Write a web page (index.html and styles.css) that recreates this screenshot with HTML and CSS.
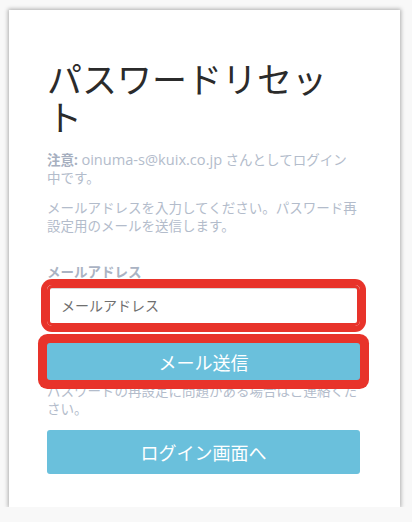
FILE: index.html
```html
<!DOCTYPE html>
<html lang="ja">
<head>
  <meta charset="UTF-8">
  <meta name="viewport" content="width=device-width, initial-scale=1.0">
  <title>パスワードリセット</title>
  <link rel="stylesheet" href="styles.css">
</head>
<body>
  <div class="reset-card">
    <h1>パスワードリセット</h1>
    <p class="note"><strong>注意:</strong> <span class="mail">oinuma-s@kuix.co.jp</span> さんとしてログイン中です。</p>
    <p class="note">メールアドレスを入力してください。パスワード再設定用のメールを送信します。</p>

    <form class="reset-form" onsubmit="return false">
      <label for="email">メールアドレス</label>
      <input type="email" id="email" class="marked" placeholder="メールアドレス">
      <button type="submit" class="btn marked">メール送信</button>
    </form>

    <p class="note help">パスワードの再設定に問題がある場合はご連絡ください。</p>
    <button class="btn" onclick="location.href='#login'">ログイン画面へ</button>
  </div>
</body>
</html>
```

FILE: styles.css
```css
body {
  font-family: "Open Sans", "Noto Sans CJK JP", sans-serif;
  background: #f8f8f8;
  color: #333;
  margin: 0;
  padding: 10px 0 0 9px;
}
.reset-card {
  width: 391px;
  box-sizing: border-box;
  background: #fff;
  padding: 49px 40px 33px 38px;
  box-shadow: 0 0 4px 1px rgba(0,0,0,0.3);
}
h1 {
  font-family: "Noto Sans CJK JP", sans-serif;
  font-size: 35px;
  font-weight: 400;
  line-height: 38px;
  margin: 0 0 15px;
  color: #2b2b2b;
}
.note {
  font-size: 13.5px;
  line-height: 18px;
  color: #b3bccb;
  margin: 0 0 12px;
}
.note strong {
  color: #a6afbf;
}
.note .mail {
  font-size: 14.6px;
}
.reset-form {
  display: flex;
  flex-direction: column;
  margin-top: 28px;
}
label {
  font-size: 13.5px;
  font-weight: bold;
  line-height: 18px;
  color: #aab3c3;
  margin-bottom: 4px;
}
input, .btn {
  width: 100%;
  box-sizing: border-box;
  border: none;
  border-radius: 3px;
  font-family: inherit;
}
input {
  height: 41px;
  padding: 0 14px;
  font-size: 14px;
  color: #555;
  background: #fff;
}
input::placeholder {
  color: #6f6f6f;
}
.btn {
  height: 44px;
  background: #6ac0dc;
  color: #fff;
  font-size: 18px;
  cursor: pointer;
}
.reset-form .btn {
  height: 37px;
  margin-top: 17px;
}
/* red review markers drawn over the form controls */
input.marked {
  box-shadow: inset 0 0 0 3px #e8332a, inset 0 4px 0 0 #d8d8d8, 0 0 0 6px #e8332a;
  border-radius: 5px;
}
.btn.marked {
  box-shadow: 0 0 0 9px #e8332a;
  position: relative;
}
.help {
  margin: 2px 0 12px;
}
```
